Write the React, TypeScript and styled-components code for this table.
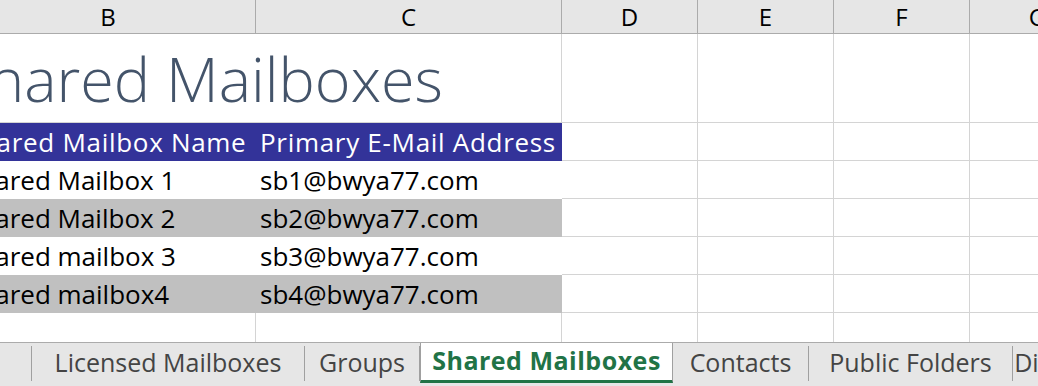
import React from "react";
import styled, { createGlobalStyle } from "styled-components";

const GlobalStyle = createGlobalStyle`
  html, body {
    margin: 0;
    padding: 0;
    background: #ffffff;
    overflow: hidden;
  }
  body {
    font-family: "Open Sans", "Noto Sans", sans-serif;
  }
`;

const COLS = "295px 306px 136px 136px 136px 136px";

type Fill = "none" | "head" | "band" | "white";

const fillColor: Record<Fill, string> = {
  none: "transparent",
  head: "#333399",
  band: "#c0c0c0",
  white: "#ffffff",
};

const rows = [
  { name: "Shared Mailbox 1", mail: "sb1@bwya77.com", fill: "white" as Fill },
  { name: "Shared Mailbox 2", mail: "sb2@bwya77.com", fill: "band" as Fill },
  { name: "Shared mailbox 3", mail: "sb3@bwya77.com", fill: "white" as Fill },
  { name: "Shared mailbox4", mail: "sb4@bwya77.com", fill: "band" as Fill },
];

const tabs = [
  { label: "Licensed Mailboxes", width: 273 },
  { label: "Groups", width: 115 },
  { label: "Shared Mailboxes", width: 253, active: true },
  { label: "Contacts", width: 136 },
  { label: "Public Folders", width: 204 },
  { label: "Distribution Lists", width: 200 },
];

const App = () => {
  return (
    <>
      <GlobalStyle />
      <Sheet>
        <Grid>
          {["B", "C", "D", "E", "F", "G"].map((c) => (
            <ColHead key={c}>{c}</ColHead>
          ))}

          <TitleCell>Shared Mailboxes</TitleCell>
          <Cell $h={89} />
          <Cell $h={89} />
          <Cell $h={89} />
          <Cell $h={89} />

          <Cell $fill="head">Shared Mailbox Name</Cell>
          <Cell $fill="head">Primary E-Mail Address</Cell>
          <Cell />
          <Cell />
          <Cell />
          <Cell />

          {rows.map((r) => (
            <React.Fragment key={r.mail}>
              <Cell $fill={r.fill}>{r.name}</Cell>
              <Cell $fill={r.fill}>{r.mail}</Cell>
              <Cell />
              <Cell />
              <Cell />
              <Cell />
            </React.Fragment>
          ))}

          <Cell />
          <Cell />
          <Cell />
          <Cell />
          <Cell />
          <Cell />
        </Grid>

        <TabBar>
          <ScrollStub />
          {tabs.map((t) => (
            <Tab key={t.label} $width={t.width} $active={!!t.active}>
              {t.label}
            </Tab>
          ))}
        </TabBar>
      </Sheet>
    </>
  );
};

const Sheet = styled.div`
  width: 1038px;
  height: 386px;
  overflow: hidden;
  display: flex;
  flex-direction: column;
  background: #ffffff;
`;

const Grid = styled.div`
  flex: 1;
  min-height: 0;
  overflow: hidden;
  display: grid;
  grid-template-columns: ${COLS};
  grid-auto-rows: min-content;
  width: 1145px;
  margin-left: -39px;
`;

const ColHead = styled.div`
  box-sizing: border-box;
  height: 34px;
  background: #e6e6e6;
  border-right: 1px solid #ababab;
  border-bottom: 1px solid #ababab;
  display: flex;
  align-items: center;
  justify-content: center;
  font-size: 24px;
  color: #000000;
`;

const Cell = styled.div<{ $fill?: Fill; $h?: number }>`
  box-sizing: border-box;
  height: ${(p) => p.$h ?? 38}px;
  padding: 0 0 0 4px;
  display: flex;
  align-items: flex-end;
  white-space: nowrap;
  overflow: hidden;
  font-size: 26px;
  line-height: 36px;
  letter-spacing: ${(p) => (p.$fill === "head" ? "0.7px" : "0")};
  color: ${(p) => (p.$fill === "head" ? "#ffffff" : "#000000")};
  background: ${(p) => fillColor[p.$fill ?? "none"]};
  border-right: 1px solid
    ${(p) => (p.$fill && p.$fill !== "none" ? fillColor[p.$fill] : "#d4d4d4")};
  border-bottom: 1px solid
    ${(p) => (p.$fill && p.$fill !== "none" ? fillColor[p.$fill] : "#d4d4d4")};
`;

const TitleCell = styled.div`
  grid-column: span 2;
  box-sizing: border-box;
  height: 89px;
  padding: 0 0 3px 0;
  display: flex;
  align-items: flex-end;
  white-space: nowrap;
  overflow: hidden;
  text-indent: -6px;
  font-size: 61px;
  font-weight: 300;
  line-height: 80px;
  color: #44546a;
  border-right: 1px solid #d4d4d4;
  border-bottom: 1px solid #d4d4d4;
`;

const TabBar = styled.div`
  flex: none;
  height: 44px;
  box-sizing: border-box;
  display: flex;
  align-items: flex-start;
  background: #e6e6e6;
  border-top: 1px solid #ababab;
  overflow: hidden;
`;

const ScrollStub = styled.div`
  flex: none;
  width: 31px;
  height: 35px;
  margin-top: 3px;
  border-right: 1px solid #a0a0a0;
`;

const Tab = styled.div<{ $width: number; $active: boolean }>`
  flex: none;
  box-sizing: border-box;
  width: ${(p) => p.$width}px;
  height: ${(p) => (p.$active ? 41 : 38)}px;
  margin-top: ${(p) => (p.$active ? -1 : 0)}px;
  padding-bottom: ${(p) => (p.$active ? 2 : 0)}px;
  display: flex;
  align-items: center;
  justify-content: center;
  font-size: 25px;
  white-space: nowrap;
  letter-spacing: ${(p) => (p.$active ? "0.5px" : "0")};
  font-weight: ${(p) => (p.$active ? 700 : 400)};
  color: ${(p) => (p.$active ? "#217346" : "#444444")};
  background: ${(p) => (p.$active ? "#ffffff" : "transparent")};
  border-left: ${(p) => (p.$active ? "1px solid #a0a0a0" : "none")};
  border-right: 1px solid ${(p) => (p.$active ? "#a0a0a0" : "transparent")};
  border-bottom: ${(p) => (p.$active ? "3px solid #217346" : "none")};
  position: relative;

  &::after {
    content: "";
    display: ${(p) => (p.$active ? "none" : "block")};
    position: absolute;
    right: -1px;
    top: 3px;
    height: 35px;
    width: 1px;
    background: #a0a0a0;
  }
`;

export default App;
